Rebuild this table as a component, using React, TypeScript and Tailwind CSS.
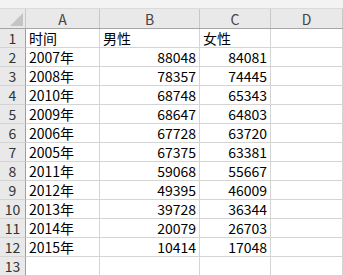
import React from 'react'

const rows: [string, number, number][] = [
    ['2007年', 88048, 84081],
    ['2008年', 78357, 74445],
    ['2010年', 68748, 65343],
    ['2009年', 68647, 64803],
    ['2006年', 67728, 63720],
    ['2005年', 67375, 63381],
    ['2011年', 59068, 55667],
    ['2012年', 49395, 46009],
    ['2013年', 39728, 36344],
    ['2014年', 20079, 26703],
    ['2015年', 10414, 17048],
]

const font = { fontFamily: '"Noto Sans CJK SC", "Noto Sans", sans-serif' }

function RowHead({ n }: { n: number }) {
    return (
        <div className="w-[26px] shrink-0 h-[19px] bg-[#e9e9e9] border-r border-b border-r-[#9f9f9f] border-b-[#d4d4d4] flex items-center justify-center text-[14px] text-[#333] leading-none">
            {n}
        </div>
    )
}

function Cell({ w, children, right, last }: { w: string; children?: React.ReactNode; right?: boolean; last?: boolean }) {
    return (
        <div className={`${w} ${last ? 'grow' : 'shrink-0'} h-[19px] border-r border-b border-[#d4d4d4] flex items-center px-[3px] text-[14px] text-black leading-none ${right ? 'justify-end' : ''}`}>
            {children}
        </div>
    )
}

export default function App() {
    return (
        <div className="w-[343px] h-[276px] overflow-hidden bg-white" style={font}>
            {/* formula bar edge */}
            <div className="h-[9px] bg-[#f3f3f3] border-b border-[#dadada]" />

            {/* column headers */}
            <div className="flex h-[20px] bg-[#e9e9e9] border-b border-[#a6a6a6]">
                <div className="w-[26px] shrink-0 relative border-r border-[#c8c8c8]">
                    <svg className="absolute right-[2px] bottom-[2px]" width="13" height="13" viewBox="0 0 13 13">
                        <polygon points="13,0 13,13 0,13" fill="#c4c4c4" />
                    </svg>
                </div>
                {['A', 'B', 'C', 'D'].map((c, i) => (
                    <div
                        key={c}
                        className={`${['w-[74px]', 'w-[100px]', 'w-[71px]', 'w-[72px]'][i]} ${i === 3 ? 'grow' : 'shrink-0'} border-r border-[#c8c8c8] flex items-center justify-center text-[14px] text-[#444] leading-none`}
                    >
                        {c}
                    </div>
                ))}
            </div>

            <div className="flex">
                <RowHead n={1} />
                <Cell w="w-[74px]">时间</Cell>
                <Cell w="w-[100px]">男性</Cell>
                <Cell w="w-[71px]">女性</Cell>
                <Cell w="w-[72px]" last />
            </div>
            {rows.map(([y, m, f], i) => (
                <div className="flex" key={y}>
                    <RowHead n={i + 2} />
                    <Cell w="w-[74px]">{y}</Cell>
                    <Cell w="w-[100px]" right>{m}</Cell>
                    <Cell w="w-[71px]" right>{f}</Cell>
                    <Cell w="w-[72px]" last />
                </div>
            ))}
            <div className="flex">
                <RowHead n={13} />
                <Cell w="w-[74px]" />
                <Cell w="w-[100px]" />
                <Cell w="w-[71px]" />
                <Cell w="w-[72px]" last />
            </div>
        </div>
    )
}
